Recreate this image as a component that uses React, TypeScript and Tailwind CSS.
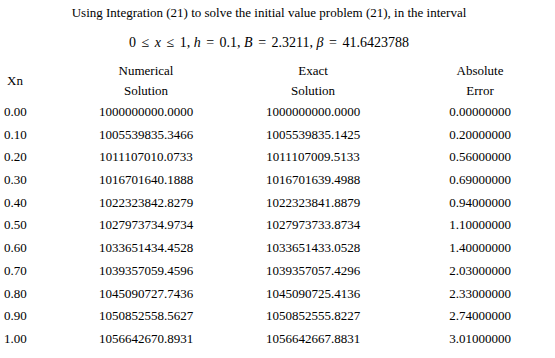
const rows: [string, string, string, string][] = [
  ["0.00", "1000000000.0000", "1000000000.0000", "0.00000000"],
  ["0.10", "1005539835.3466", "1005539835.1425", "0.20000000"],
  ["0.20", "1011107010.0733", "1011107009.5133", "0.56000000"],
  ["0.30", "1016701640.1888", "1016701639.4988", "0.69000000"],
  ["0.40", "1022323842.8279", "1022323841.8879", "0.94000000"],
  ["0.50", "1027973734.9734", "1027973733.8734", "1.10000000"],
  ["0.60", "1033651434.4528", "1033651433.0528", "1.40000000"],
  ["0.70", "1039357059.4596", "1039357057.4296", "2.03000000"],
  ["0.80", "1045090727.7436", "1045090725.4136", "2.33000000"],
  ["0.90", "1050852558.5627", "1050852555.8227", "2.74000000"],
  ["1.00", "1056642670.8931", "1056642667.8831", "3.01000000"],
];

function Op({ c }: { c: string }) {
  return <span className="px-[2px]">{c}</span>;
}

export default function App() {
  return (
    <div className="w-[555px] h-[358px] overflow-hidden bg-white text-black text-[13px] font-['Liberation_Serif',serif]">
      <div className="w-[538px] pt-[3px] text-center">
        <div className="leading-[20px]">Using Integration (21) to solve the initial value problem (21), in the interval</div>
        <div className="mt-[10px] leading-[20px] text-[14px]">
          0 <Op c="≤" /> <i>x</i> <Op c="≤" /> 1, <i>h</i> <Op c="=" /> 0.1, <i>B</i> <Op c="=" /> 2.3211, <i>β</i> <Op c="=" /> 41.6423788
        </div>
      </div>
      <div className="mt-[8px] grid w-[564px] grid-cols-[62.5px_167px_167px_167px]">
        <div className="flex items-center pl-[7px] leading-[20px]">Xn</div>
        <div className="text-center leading-[20px]">Numerical<br />Solution</div>
        <div className="text-center leading-[20px]">Exact<br />Solution</div>
        <div className="text-center leading-[20px]">Absolute<br />Error</div>
        {rows.map((r) => (
          <div key={r[0]} className="contents">
            <div className="h-[22.7px] pl-[4px] leading-[22.7px]">{r[0]}</div>
            <div className="h-[22.7px] text-center leading-[22.7px]">{r[1]}</div>
            <div className="h-[22.7px] text-center leading-[22.7px]">{r[2]}</div>
            <div className="h-[22.7px] text-center leading-[22.7px]">{r[3]}</div>
          </div>
        ))}
      </div>
    </div>
  );
}
